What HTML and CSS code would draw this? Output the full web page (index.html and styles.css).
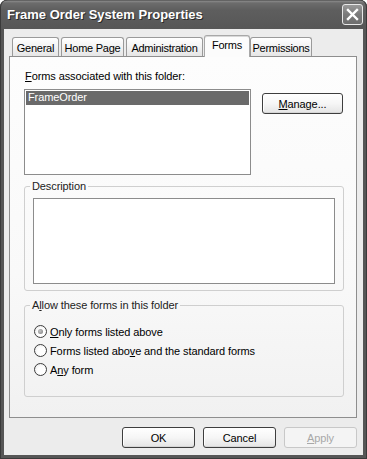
FILE: index.html
```html
<!DOCTYPE html>
<html>
<head>
<meta charset="utf-8">
<link rel="stylesheet" href="styles.css">
</head>
<body>
<div class="window">
  <div class="titlebar">
    <span class="title">Frame Order System Properties</span>
    <span class="close">
      <svg width="13" height="13" viewBox="0 0 13 13"><path d="M2 2 L11 11 M11 2 L2 11" stroke="#fff" stroke-width="2.4" stroke-linecap="square"/></svg>
    </span>
  </div>
  <div class="client">
    <div class="tabs">
      <div class="tab tab-general">General</div>
      <div class="tab tab-home">Home Page</div>
      <div class="tab tab-admin">Administration</div>
      <div class="tab tab-forms active">Forms</div>
      <div class="tab tab-perm">Permissions</div>
    </div>
    <div class="panel">
      <div class="label"><u>F</u>orms associated with this folder:</div>
      <div class="list-row">
        <div class="listbox">
          <div class="item selected">FrameOrder</div>
        </div>
        <div class="btn manage"><span><u>M</u>anage...</span></div>
      </div>
      <fieldset class="group desc">
        <legend>Description</legend>
        <div class="textbox"></div>
      </fieldset>
      <fieldset class="group allow">
        <legend>A<u>l</u>low these forms in this folder</legend>
        <div class="radio-row"><span class="radio checked"></span><span><u>O</u>nly forms listed above</span></div>
        <div class="radio-row"><span class="radio"></span><span>Forms listed abo<u>v</u>e and the standard forms</span></div>
        <div class="radio-row"><span class="radio"></span><span>A<u>n</u>y form</span></div>
      </fieldset>
    </div>
    <div class="buttons">
      <div class="btn">OK</div>
      <div class="btn">Cancel</div>
      <div class="btn disabled"><span><u>A</u>pply</span></div>
    </div>
  </div>
</div>
</body>
</html>
```
FILE: styles.css
```css
* { box-sizing: border-box; }
html, body { margin: 0; padding: 0; background: #fff; }
body {
  width: 367px;
  height: 459px;
  overflow: hidden;
  font-family: "Liberation Sans", Arial, sans-serif;
  font-size: 11px;
  letter-spacing: -0.1px;
  color: #000;
}
u { text-decoration: underline; text-underline-offset: 1px; }

.window {
  width: 367px;
  height: 459px;
  display: flex;
  flex-direction: column;
  background: #565656;
  border-radius: 7px 7px 0 0;
  box-shadow: inset 0 0 0 1px #3a3a3a;
}
.titlebar {
  height: 29px;
  display: flex;
  align-items: center;
  justify-content: space-between;
  padding: 0 4px 1px 7px;
  border-radius: 7px 7px 0 0;
  background: linear-gradient(#3c3c3c 0, #8a8a8a 1px, #6c6c6c 3px, #5e5e5e 10px, #575757 100%);
  box-shadow: inset 1px 0 0 #3a3a3a, inset -1px 0 0 #3a3a3a;
}
.title {
  color: #fff;
  font-weight: bold;
  font-size: 13px;
  letter-spacing: 0;
  text-shadow: 1px 1px 0 #2a2a2a;
}
.close {
  width: 21px;
  height: 21px;
  border: 1px solid #e8e8e8;
  border-radius: 3px;
  background: linear-gradient(#999, #7a7a7a 50%, #6e6e6e);
  display: flex;
  align-items: center;
  justify-content: center;
}
.close svg { display: block; }

.client {
  flex: 1;
  margin: 0 4px 4px;
  background: #ececec;
  display: flex;
  flex-direction: column;
  padding: 6px 6px 0 5px;
}

.tabs {
  display: flex;
  align-items: flex-end;
  height: 22px;
  padding-left: 3px;
  gap: 2px;
  position: relative;
  z-index: 1;
}
.tab {
  height: 19px;
  margin-bottom: 1px;
  border: 1px solid #9a9a9a;
  border-bottom: none;
  border-radius: 3px 3px 0 0;
  background: linear-gradient(#ffffff, #f0f0f0 60%, #e6e6e6);
  display: flex;
  align-items: center;
  justify-content: center;
  padding-top: 1px;
  white-space: nowrap;
  letter-spacing: -0.25px;
}
.tab-general { width: 47px; }
.tab-home { width: 63px; }
.tab-admin { width: 77px; }
.tab-perm { width: 62px; }
.tab-forms { width: 46px; }
.tab.active {
  height: 22px;
  margin: 0 -2px 0 -1px;
  background: #fcfcfc;
  border-color: #a8a8a8;
  box-shadow: inset 0 1px 0 #d8d8d8;
  padding-top: 0;
  padding-bottom: 3px;
}

.panel {
  width: 348px;
  height: 362px;
  margin-top: -1px;
  border: 1px solid #8e8e8e;
  background: linear-gradient(#fdfdfd, #f9f9f9 60%, #f1f1f1);
  padding: 13px 12px 0 14px;
}
.label {
  line-height: 13px;
  height: 13px;
  margin-left: 1px;
}
.list-row {
  display: flex;
  align-items: flex-start;
  margin-top: 6px;
}
.listbox {
  width: 227px;
  height: 86px;
  border: 1px solid #8c8c8c;
  background: #fff;
  padding: 1px;
}
.item {
  height: 14px;
  line-height: 13px;
  padding-left: 2px;
}
.item.selected {
  background: #6a6a6a;
  color: #fff;
}

.btn {
  width: 73px;
  height: 21px;
  border: 1px solid #3e3e3e;
  border-radius: 3px;
  background: linear-gradient(#ffffff, #f6f6f6 50%, #e4e4e4);
  box-shadow: inset 0 -1px 0 #d6d6d6, inset 1px 0 0 #fff;
  display: flex;
  align-items: center;
  justify-content: center;
}
.manage {
  width: 81px;
  margin-left: 11px;
  margin-top: 4px;
}

.group {
  margin: 0;
  width: 320px;
  border: 1px solid #cfcfcf;
  border-radius: 3px;
  min-width: 0;
}
.group legend {
  padding: 0 2px;
  margin-left: -3px;
  line-height: 13px;
  color: #222;
}
.desc {
  margin-top: 5px;
  padding: 5px 8px 6px 8px;
}
.textbox {
  width: 302px;
  height: 86px;
  border: 1px solid #8c8c8c;
  background: #fff;
}
.allow {
  margin-top: 8px;
  padding: 10px 8px 17px 8px;
}
.radio-row {
  height: 19px;
  display: flex;
  align-items: center;
  gap: 3px;
}
.radio {
  width: 13px;
  height: 13px;
  margin-left: 1px;
  border: 1px solid #3c3c3c;
  border-radius: 50%;
  background: radial-gradient(circle at 60% 60%, #ffffff 40%, #e4e4e4 100%);
  display: flex;
  align-items: center;
  justify-content: center;
}
.radio.checked::after {
  content: "";
  width: 5px;
  height: 5px;
  border-radius: 50%;
  background: radial-gradient(circle at 40% 40%, #c4c4c4, #7a7a7a);
}

.buttons {
  display: flex;
  justify-content: flex-end;
  gap: 8px;
  margin-top: 9px;
}
.btn.disabled {
  border-color: #c8c8c8;
  color: #a8a8a8;
  background: #f4f4f4;
  box-shadow: none;
}
```
